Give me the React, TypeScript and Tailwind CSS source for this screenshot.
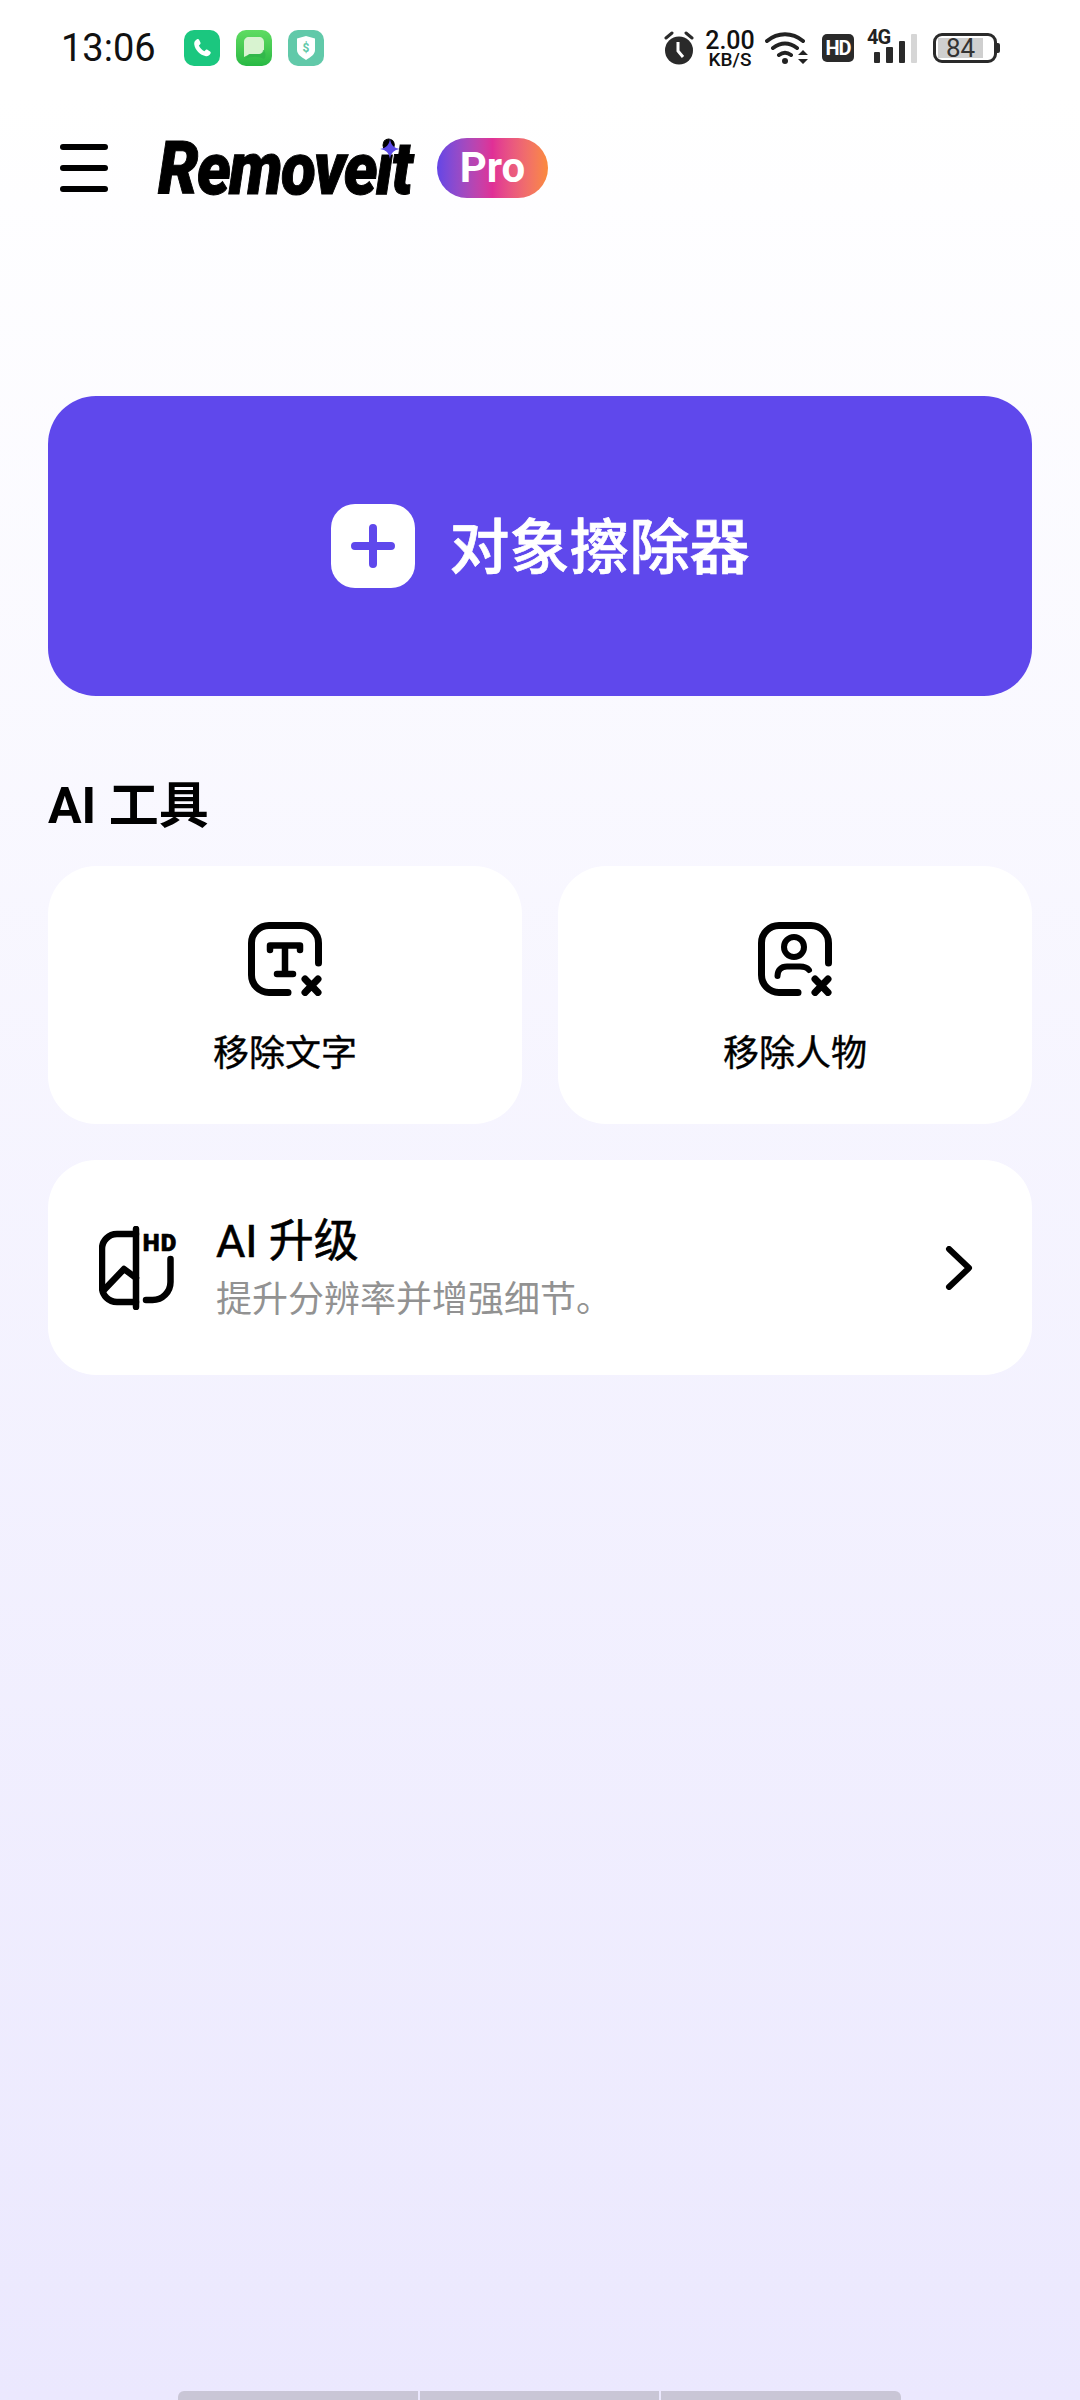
const StatusBar = () => {
  return (
    <div className="h-[96px] pl-[61px] pr-[80px] flex items-center text-[#111]">
      <span className="text-[38px] leading-none w-[123px] mt-[-1px]">13:06</span>
      <div className="flex gap-[16px]">
        <div className="w-[36px] h-[36px] rounded-[10px] bg-[#1bc77f] flex items-center justify-center">
          <svg width="22" height="22" viewBox="0 0 24 24" fill="white">
            <path d="M6.6 2.5c.8-.5 1.8-.2 2.2.6l1.5 3c.3.7.2 1.4-.3 1.9L8.6 9.3c1 2.5 3.500 5 6 6.200l1.400-1.300c.5-.5 1.300-.6 1.900-.2l2.900 1.700c.8.500 1 1.500.5 2.200-1.300 2.100-3 3.400-5 3-6.500-1.200-11.800-6.700-12.800-13-.3-2.300 1-4.200 3-5.400z" />
          </svg>
        </div>
        <div className="w-[36px] h-[36px] rounded-[10px] bg-gradient-to-b from-[#5fdc62] to-[#27b944] flex items-center justify-center">
          <svg width="28" height="28" viewBox="0 0 28 28">
            <path d="M4 8C4 5 6 3 9 3H19C22 3 24 5 24 8V15C24 18 22 20 19 20H10L4 23Z" fill="#d8f3d0" />
            <path d="M9 20H19C21 20 23 18 23 16H24C26 20 26 23 24 25C18 22 12 22 5 25Z" fill="#2fb24a" opacity="0.7" />
          </svg>
        </div>
        <div className="w-[36px] h-[36px] rounded-[10px] bg-[#61c9a9] flex items-center justify-center">
          <svg width="24" height="26" viewBox="0 0 24 26">
            <path d="M3 3.500 12 1l9 2.500V15c0 4-4 7-9 10-5-3-9-6-9-10z" fill="white" />
            <text x="12" y="17" textAnchor="middle" fontSize="12" fontWeight="700" fill="#61c9a9">$</text>
          </svg>
        </div>
      </div>

      <div className="ml-auto flex items-center h-[40px]">
        <svg width="32" height="34" viewBox="0 0 32 34" className="mr-[10px]">
          <circle cx="16" cy="19.500" r="14" fill="#2a2a2a" />
          <path d="M3 7l6-5M29 7l-6-5" stroke="#2a2a2a" strokeWidth="3" strokeLinecap="round" />
          <path d="M15 11v9l5 6" stroke="white" strokeWidth="3" fill="none" />
        </svg>
        <div className="w-[50px] mr-[10px] flex flex-col items-center leading-none font-medium">
          <span className="text-[25px] h-[22px] leading-[22px]">2.00</span>
          <span className="text-[19px] h-[15px] leading-[15px]">KB/S</span>
        </div>
        <svg width="44" height="36" viewBox="0 0 44 36" className="mr-[13px]">
          <path d="M2 11C13 2 27 2 38 11M8 18c8-6 16-6 24 0M14 25c4-3 8-3 12 0" stroke="#222" strokeWidth="4" fill="none" strokeLinecap="round" />
          <circle cx="20" cy="31" r="3" fill="#222" />
          <path d="M38 20l5 5H33zM33 29h10l-5 5z" fill="#222" />
        </svg>
        <div className="w-[32px] h-[28px] rounded-[5px] bg-[#2a2a2a] text-white text-[20px] font-bold flex items-center justify-center mr-[17px] tracking-[-1px]">HD</div>
        <div className="relative w-[46px] h-[34px] mr-[16px]">
          <span className="absolute left-[-4px] top-[-4px] text-[20px] font-bold leading-none text-[#222] tracking-[-1px]">4G</span>
          <div className="absolute inset-x-0 bottom-[2px] flex items-end gap-[6px] pl-[3px] h-[29px]">
            <div className="w-[7px] h-[11px] bg-[#2a2a2a] rounded-[1px]" />
            <div className="w-[7px] h-[16px] bg-[#2a2a2a] rounded-[1px]" />
            <div className="w-[7px] h-[22px] bg-[#2a2a2a] rounded-[1px]" />
            <div className="w-[6px] h-[29px] bg-[#d6d6d6] rounded-[1px]" />
          </div>
        </div>
        <div className="flex items-center">
          <div className="relative w-[64px] h-[30px] rounded-[9px] border-[3px] border-[#2a2a2a] flex items-center pl-[2px]">
            <div className="w-[45px] h-[20px] bg-[#cfcfcf] flex items-center justify-center text-[26px] leading-none text-[#333]">84</div>
          </div>
          <div className="w-[3px] h-[10px] rounded-r-[2px] bg-[#2a2a2a]" />
        </div>
      </div>
    </div>
  );
};

const TextRemoveIcon = () => (
  <svg width="74" height="74" viewBox="0 0 74 74" fill="none" stroke="#000" strokeWidth="7" strokeLinecap="round" strokeLinejoin="round">
    <path d="M40 70.500H21A17.500 17.500 0 0 1 3.500 53V21A17.500 17.500 0 0 1 21 3.500H53A17.500 17.500 0 0 1 70.500 21V41" />
    <path d="M22 28V23.500H52V28M37 24V52M29 52H45" strokeWidth="6.500" />
    <path d="M57 57L70 70.500M70 57L57 70.500" />
  </svg>
);

const PersonRemoveIcon = () => (
  <svg width="74" height="74" viewBox="0 0 74 74" fill="none" stroke="#000" strokeWidth="7" strokeLinecap="round" strokeLinejoin="round">
    <path d="M40 70.500H21A17.500 17.500 0 0 1 3.500 53V21A17.500 17.500 0 0 1 21 3.500H53A17.500 17.500 0 0 1 70.500 21V41" />
    <circle cx="36" cy="25" r="10" strokeWidth="6" />
    <path d="M19.500 54C19.500 48 23 44.500 29 44.500H42C46 44.500 49 45.500 51 48" strokeWidth="6" />
    <path d="M57 57L70 70.500M70 57L57 70.500" />
  </svg>
);

const UpscaleIcon = () => (
  <svg width="80" height="84" viewBox="0 0 80 84" fill="none" stroke="#000" strokeWidth="6.500" strokeLinecap="round" strokeLinejoin="round">
    <path d="M37 3V81" />
    <path d="M37 8H18A15 15 0 0 0 3 23V61A15 15 0 0 0 18 76H37" />
    <path d="M5 64L25 43L37 52" />
    <path d="M71.500 33V56A18 18 0 0 1 53.500 74H47" />
    <text x="61" y="25" textAnchor="middle" fontSize="24" fontWeight="900" fill="#000" stroke="#000" strokeWidth="0.6" letterSpacing="1">HD</text>
  </svg>
);

const ToolCard = ({ icon, label }: { icon: React.ReactNode; label: string }) => (
  <div className="bg-white rounded-[48px] h-[258px] flex flex-col items-center pt-[56px]">
    {icon}
    <span className="mt-[36px] text-[36px] leading-[44px] font-normal text-black [-webkit-text-stroke:0.4px_#000]">{label}</span>
  </div>
);

export default function App() {
  return (
    <div className="w-[1080px] h-[2400px] flex flex-col overflow-hidden bg-gradient-to-b from-white from-[4%] to-[#ebe8fe] font-['Roboto','Noto_Sans_CJK_SC',sans-serif]">
      <StatusBar />

      <div className="h-[144px] pl-[60px] flex items-center">
        <div className="w-[48px] flex flex-col gap-[15px]">
          <div className="h-[6px] rounded-full bg-black" />
          <div className="h-[6px] rounded-full bg-black" />
          <div className="h-[6px] rounded-full bg-black" />
        </div>
        <div className="relative ml-[50px] w-[258px] h-[60px]">
          <span className="absolute left-0 top-[-7px] text-[73px] leading-[76px] font-black italic tracking-[-2px] text-black origin-left scale-x-[0.88] whitespace-nowrap [-webkit-text-stroke:1px_#000]">Removeit</span>
          <svg width="20" height="20" viewBox="0 0 20 20" className="absolute left-[222px] top-[1px]">
            <path d="M10 0C10.800 6 14 9.200 20 10C14 10.800 10.800 14 10 20C9.200 14 6 10.800 0 10C6 9.200 9.200 6 10 0Z" fill="#5b49e8" />
          </svg>
        </div>
        <div className="ml-[21px] w-[111px] h-[60px] rounded-full bg-gradient-to-r from-[#6445e6] via-[#e02f96] to-[#fb8a3a] flex items-center justify-center text-white text-[42px] font-bold leading-none">Pro</div>
      </div>

      <div className="mx-[48px] mt-[156px] flex flex-col">
        <div className="h-[300px] rounded-[48px] bg-[#5f48ec] flex items-center justify-center gap-[35px]">
          <div className="w-[84px] h-[84px] rounded-[24px] bg-white flex items-center justify-center">
            <svg width="46" height="46" viewBox="0 0 46 46" fill="none" stroke="#5f48ec" strokeWidth="8" strokeLinecap="round">
              <path d="M23 5V41M5 23H41" />
            </svg>
          </div>
          <span className="text-[60px] leading-none font-medium text-white mt-[5px] [-webkit-text-stroke:0.7px_#fff]">对象擦除器</span>
        </div>

        <h2 className="mt-[80px] text-[50px] leading-[60px] font-bold text-black">AI 工具</h2>

        <div className="mt-[30px] grid grid-cols-2 gap-[36px]">
          <ToolCard icon={<TextRemoveIcon />} label="移除文字" />
          <ToolCard icon={<PersonRemoveIcon />} label="移除人物" />
        </div>

        <div className="mt-[36px] h-[215px] rounded-[48px] bg-white flex items-center pl-[51px] pr-[59px]">
          <UpscaleIcon />
          <div className="ml-[37px] flex flex-col">
            <span className="text-[45px] leading-[52px] font-normal text-black [-webkit-text-stroke:0.6px_#000] mt-[3px]">AI 升级</span>
            <span className="text-[36px] leading-[46px] mt-[9px] text-[#929292]">提升分辨率并增强细节。</span>
          </div>
          <svg width="28" height="44" viewBox="0 0 28 44" fill="none" stroke="#000" strokeWidth="6" strokeLinecap="round" strokeLinejoin="round" className="ml-auto">
            <path d="M4 3L24 22L4 41" />
          </svg>
        </div>
      </div>

      <div className="mt-auto mx-[178px] w-[723px] h-[9px] flex gap-[2px]">
        <div className="flex-1 rounded-tl-[6px] bg-[#c9c6d6]" />
        <div className="flex-1 bg-[#c9c6d6]" />
        <div className="flex-1 rounded-tr-[6px] bg-[#c9c6d6]" />
      </div>
    </div>
  );
}
